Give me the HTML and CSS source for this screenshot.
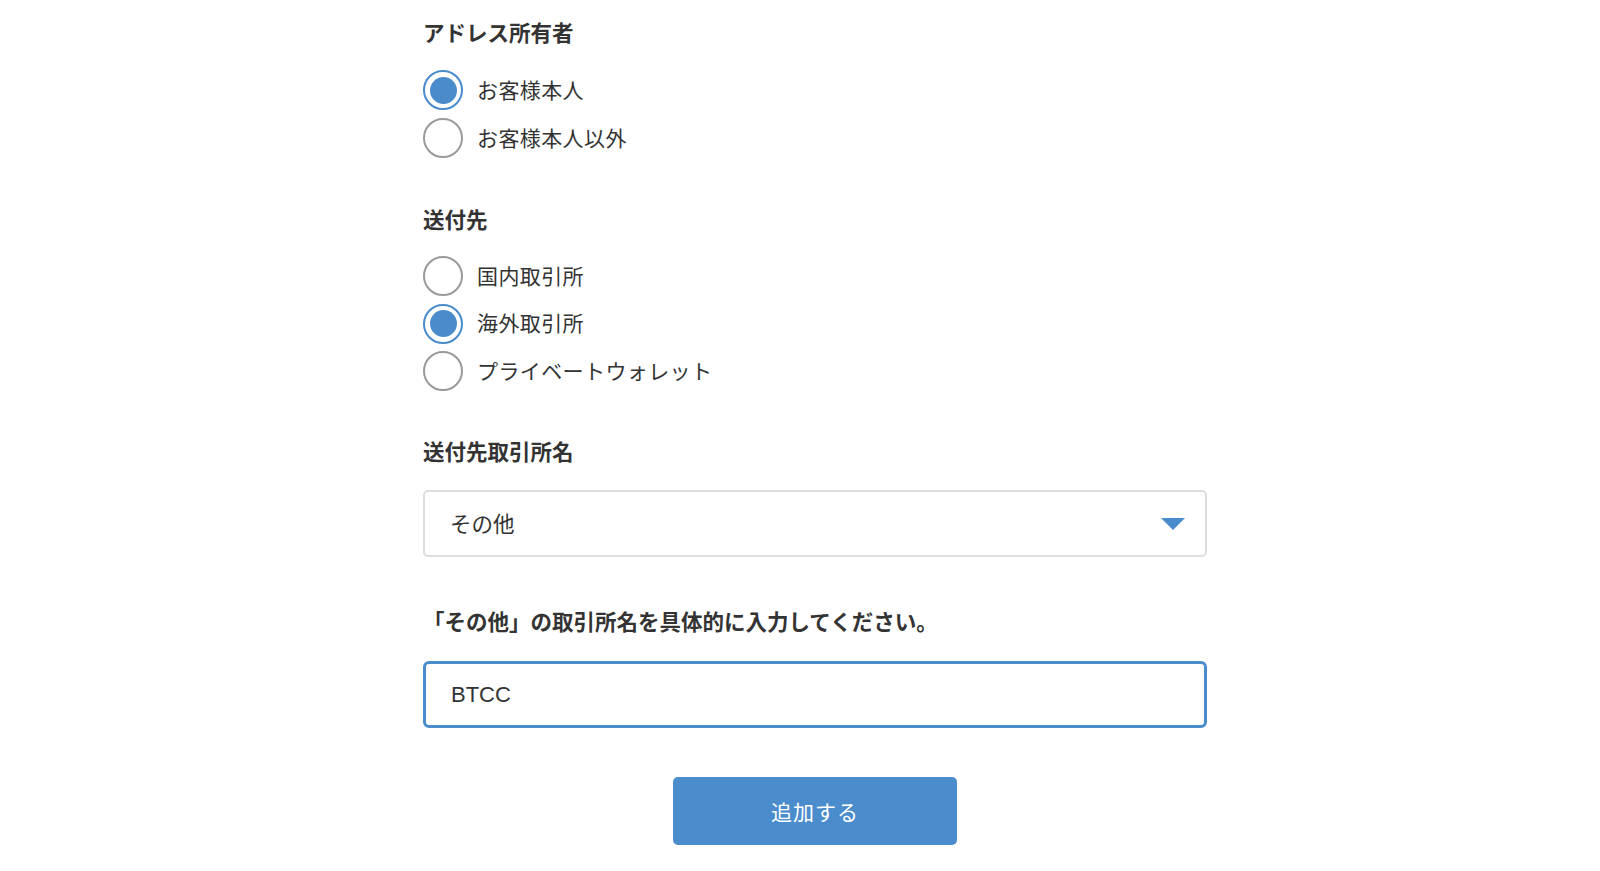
FILE: index.html
```html
<!DOCTYPE html>
<html lang="ja">
<head>
<meta charset="utf-8">
<title>アドレス登録</title>
<link rel="stylesheet" href="styles.css">
</head>
<body>
<form class="form">
  <section class="section">
    <h2 class="heading">アドレス所有者</h2>
    <div class="radios">
      <label class="radio"><input type="radio" name="owner" checked><span class="mark"></span><span class="text">お客様本人</span></label>
      <label class="radio"><input type="radio" name="owner"><span class="mark"></span><span class="text">お客様本人以外</span></label>
    </div>
  </section>
  <section class="section">
    <h2 class="heading">送付先</h2>
    <div class="radios radios-tight">
      <label class="radio"><input type="radio" name="dest"><span class="mark"></span><span class="text">国内取引所</span></label>
      <label class="radio"><input type="radio" name="dest" checked><span class="mark"></span><span class="text">海外取引所</span></label>
      <label class="radio"><input type="radio" name="dest"><span class="mark"></span><span class="text">プライベートウォレット</span></label>
    </div>
  </section>
  <section class="section">
    <h2 class="heading">送付先取引所名</h2>
    <div class="select">
      <span class="select-value">その他</span>
      <svg class="caret" width="24" height="12" viewBox="0 0 24 12"><path d="M0 0H24L12 12Z" fill="#4a8bcc"/></svg>
    </div>
  </section>
  <section class="section section-input">
    <h2 class="heading">「その他」の取引所名を具体的に入力してください。</h2>
    <input class="text-input" type="text" value="BTCC">
  </section>
  <div class="actions">
    <button type="button" class="btn">追加する</button>
  </div>
</form>
</body>
</html>
```
FILE: styles.css
```css
* { box-sizing: border-box; }
html, body { margin: 0; padding: 0; background: #fff; }
body {
  font-family: "Noto Sans CJK JP", "Noto Sans", sans-serif;
  color: #333;
}
.form {
  width: 784px;
  margin-left: 423px;
  padding-top: 19px;
  display: flex;
  flex-direction: column;
}
.section { margin-bottom: 48px; }
.section:nth-child(2) { margin-bottom: 46.5px; }
.section:nth-child(3) { margin-bottom: 51.5px; }
.section-input { margin-bottom: 49px; }
.heading {
  margin: 0;
  font-size: 21.5px;
  line-height: 26px;
  font-weight: 700;
  color: #333;
}
.radios {
  margin-top: 25px;
  display: flex;
  flex-direction: column;
  gap: 8px;
}
.radios-tight { margin-top: 24px; gap: 7.5px; }
.radio {
  display: flex;
  align-items: center;
  height: 40px;
  cursor: pointer;
}
.radio input { display: none; }
.mark {
  width: 40px;
  height: 40px;
  border-radius: 50%;
  border: 2px solid #9a9a9a;
  background: #fff;
  display: flex;
  align-items: center;
  justify-content: center;
  flex: none;
}
.radio input:checked + .mark { border-color: #4a8bcc; }
.radio input:checked + .mark::after {
  content: "";
  width: 27px;
  height: 27px;
  border-radius: 50%;
  background: #4a8bcc;
}
.text {
  margin-left: 14px;
  padding-bottom: 3px;
  font-size: 21px;
  color: #333;
  letter-spacing: 0.4px;
}
.select {
  margin-top: 26px;
  height: 67px;
  border: 2px solid #ddd;
  border-radius: 5px;
  display: flex;
  align-items: center;
  justify-content: space-between;
  padding: 0 20px 0 25px;
}
.select-value { font-size: 21.5px; color: #333; padding-bottom: 2px; }
.caret { display: block; margin-top: 2px; }
.text-input {
  display: block;
  margin-top: 27px;
  width: 100%;
  height: 67px;
  border: 3px solid #4a8bcc;
  border-radius: 6px;
  padding: 0 25px;
  font-family: "Liberation Sans", "Noto Sans CJK JP", sans-serif;
  font-size: 22px;
  color: #333;
  outline: none;
  background: #fff;
}
.actions {
  display: flex;
  justify-content: center;
}
.btn {
  width: 284px;
  height: 68px;
  border: none;
  border-radius: 5px;
  background: #4a8ccc;
  color: #fff;
  font-family: "Noto Sans CJK JP", sans-serif;
  font-size: 21px;
  letter-spacing: 1px;
  padding-bottom: 2px;
  cursor: pointer;
}
```
